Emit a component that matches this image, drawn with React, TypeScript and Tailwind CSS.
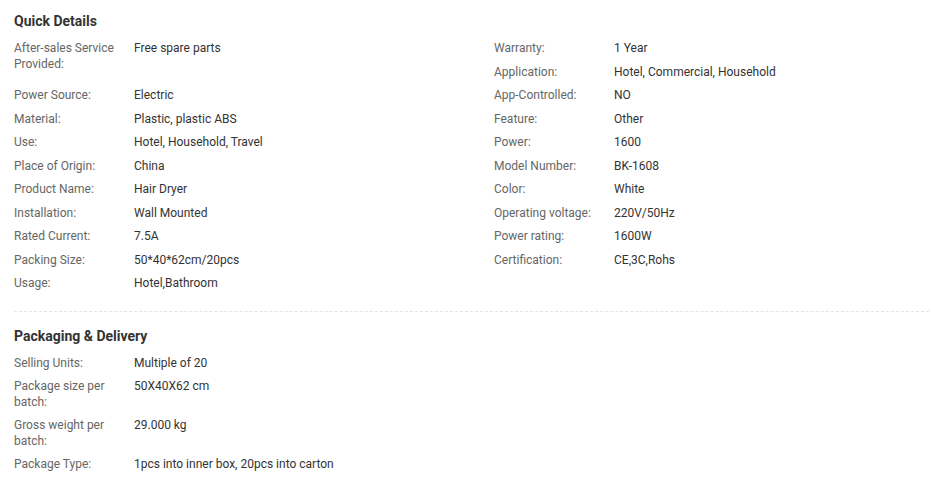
const quickDetails: { label: string; value: string; tall?: boolean }[] = [
  { label: "After-sales Service Provided:", value: "Free spare parts", tall: true },
  { label: "Warranty:", value: "1 Year" },
  { label: "Application:", value: "Hotel, Commercial, Household" },
  { label: "Power Source:", value: "Electric" },
  { label: "App-Controlled:", value: "NO" },
  { label: "Material:", value: "Plastic, plastic ABS" },
  { label: "Feature:", value: "Other" },
  { label: "Use:", value: "Hotel, Household, Travel" },
  { label: "Power:", value: "1600" },
  { label: "Place of Origin:", value: "China" },
  { label: "Model Number:", value: "BK-1608" },
  { label: "Product Name:", value: "Hair Dryer" },
  { label: "Color:", value: "White" },
  { label: "Installation:", value: "Wall Mounted" },
  { label: "Operating voltage:", value: "220V/50Hz" },
  { label: "Rated Current:", value: "7.5A" },
  { label: "Power rating:", value: "1600W" },
  { label: "Packing Size:", value: "50*40*62cm/20pcs" },
  { label: "Certification:", value: "CE,3C,Rohs" },
  { label: "Usage:", value: "Hotel,Bathroom" },
]

const packaging = [
  { label: "Selling Units:", value: "Multiple of 20" },
  { label: "Package size per batch:", value: "50X40X62 cm" },
  { label: "Gross weight per batch:", value: "29.000 kg" },
  { label: "Package Type:", value: "1pcs into inner box, 20pcs into carton" },
]

function Attr({ label, value, className }: { label: string; value: string; className?: string }) {
  return (
    <div className={`flex text-xs leading-4 ${className ?? ""}`}>
      <span className="w-[120px] shrink-0 pr-2 text-[#666]">{label}</span>
      <span className="text-[#333]">{value}</span>
    </div>
  )
}

export default function App() {
  return (
    <div
      className="min-h-[477px] w-[931px] bg-white pl-[14px] pr-[2px] pt-[11px]"
      style={{ fontFamily: "Roboto, 'Liberation Sans', sans-serif" }}
    >
      {/* Quick Details */}
      <h3 className="text-sm leading-5 font-bold text-[#333]">Quick Details</h3>
      <div className="mt-[9px] grid grid-cols-[480px_1fr] auto-rows-[23.5px]">
        {quickDetails.map((item) => (
          <Attr
            key={item.label}
            label={item.label}
            value={item.value}
            className={item.tall ? "row-span-2" : ""}
          />
        ))}
      </div>

      <div className="mt-[12.5px] border-t border-dashed border-[#e5e5e5]" />

      {/* Packaging & Delivery */}
      <h3 className="mt-[14px] text-sm leading-5 font-bold text-[#333]">Packaging &amp; Delivery</h3>
      <div className="mt-[9px] flex flex-col gap-[7px]">
        {packaging.map((item) => (
          <Attr key={item.label} label={item.label} value={item.value} />
        ))}
      </div>
    </div>
  )
}
